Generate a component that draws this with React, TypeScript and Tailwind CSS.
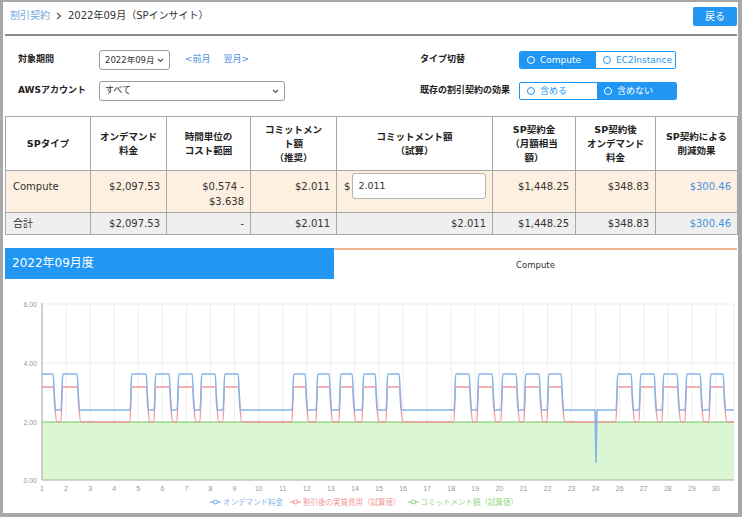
import React from "react";

const blueTop = 373;
const blueBase = 409;
const redTop = 386;
const redBase = 421;
const X0 = 42;
const X1 = 734;
const Y0 = 479;

const peaks: [number, number][] = [
  [42, 53], [63, 77], [132, 146], [156, 169], [179, 192], [202, 215], [225, 238],
  [294, 305], [318, 329], [341, 352], [364, 375], [388, 399],
  [456, 469], [479, 492], [503, 516], [526, 539], [549, 561],
  [618, 631], [641, 654], [664, 677], [687, 700], [711, 723],
];

function buildPath(top: number, base: number, rise: number, fall: number, dip?: boolean) {
  let d = "";
  const first = peaks[0];
  if (first[0] <= X0) {
    d = `M ${X0} ${top}`;
  } else {
    d = `M ${X0} ${base}`;
  }
  peaks.forEach(([a, b], i) => {
    if (!(i === 0 && a <= X0)) {
      d += ` L ${a - rise} ${base} C ${a - rise * 0.4} ${base} ${a - rise * 0.6} ${top} ${a} ${top}`;
    }
    d += ` L ${b} ${top} C ${b + fall * 0.6} ${top} ${b + fall * 0.4} ${base} ${b + fall} ${base}`;
    if (dip && b === 561) {
      d += ` L 595 ${base} L 596 462 L 597 ${base}`;
    }
  });
  d += ` L ${X1} ${base}`;
  return d;
}

const xLabels = [
  "1", "2", "3", "4", "5", "6", "7", "8", "9", "10", "11", "12", "13", "14", "15", "16", "17", "18",
  "19", "20", "21", "22", "23", "24", "26", "27", "28", "29", "30",
];
const xAt = (i: number) => X0 + i * 24.07;

function Chevron() {
  return (
    <svg width="7" height="5" viewBox="0 0 7 5" className="shrink-0">
      <path d="M1 1 L3.5 3.5 L6 1" fill="none" stroke="#555" strokeWidth="1.2" />
    </svg>
  );
}

function Radio({ on }: { on: boolean }) {
  return (
    <span
      className={
        on
          ? "w-[8px] h-[8px] rounded-full border-[1.5px] border-white"
          : "w-[8px] h-[8px] rounded-full border-[1.5px] border-[#2196f3]"
      }
    />
  );
}

function Toggle({ a, b, sel, wa, wb }: { a: string; b: string; sel: 0 | 1; wa: number; wb: number }) {
  return (
    <div className="flex h-[18px] border border-[#2196f3] rounded-[2px] overflow-hidden text-[9px] leading-[16px]">
      <div
        style={{ width: wa }}
        className={
          sel === 0
            ? "flex items-center gap-[5px] pl-[7px] bg-[#2196f3] text-white"
            : "flex items-center gap-[5px] pl-[7px] bg-white text-[#2196f3]"
        }
      >
        <Radio on={sel === 0} />
        <span>{a}</span>
      </div>
      <div
        style={{ width: wb }}
        className={
          sel === 1
            ? "flex items-center gap-[5px] pl-[7px] bg-[#2196f3] text-white"
            : "flex items-center gap-[5px] pl-[7px] bg-white text-[#2196f3]"
        }
      >
        <Radio on={sel === 1} />
        <span>{b}</span>
      </div>
    </div>
  );
}

function LegendItem({ color, label }: { color: string; label: string }) {
  return (
    <div className="flex items-center gap-[2px]" style={{ color }}>
      <svg width="11" height="6" viewBox="0 0 11 6">
        <line x1="0" y1="3" x2="11" y2="3" stroke={color} strokeWidth="1.2" />
        <circle cx="5.5" cy="3" r="2" fill="white" stroke={color} strokeWidth="1.2" />
      </svg>
      <span>{label}</span>
    </div>
  );
}

export default function App() {
  const th = "border border-[#a8a8a8] font-bold text-center align-middle leading-[14px] text-[9.5px] text-[#222]";
  const tdR = "border border-[#a8a8a8] text-right align-top pt-[8px] pr-[6px] leading-[15px]";
  const tdT = "border border-[#a8a8a8] text-right align-middle pr-[6px] leading-[14px]";

  return (
    <div className="w-[742px] h-[517px] bg-white border-t-2 border-l-[3px] border-r-4 border-b-4 border-[#a8a8a8] overflow-hidden font-['DejaVu_Sans','Noto_Sans_CJK_JP',sans-serif] text-[#333]">
      {/* header */}
      <div className="flex justify-between items-start h-[32px]">
        <div className="flex items-center mt-[4px] ml-[7px] leading-[20px] text-[10px]">
          <span className="text-[#6fa8dc]">割引契約</span>
          <span className="mx-[6px] text-[#666]">
            <svg width="6" height="8" viewBox="0 0 6 8">
              <path d="M1 1 L4.5 4 L1 7" fill="none" stroke="#555" strokeWidth="1.2" />
            </svg>
          </span>
          <span className="text-[#333]">2022年09月（SPインサイト）</span>
        </div>
        <button className="mt-[5px] mr-[1px] w-[44px] h-[19px] bg-[#2196f3] text-white text-[10px] leading-[19px] rounded-[2px]">
          戻る
        </button>
      </div>
      <div className="ml-[2px] mr-[1px] h-[2px] bg-[#8c8c8c]" />

      {/* filters */}
      <div className="mt-[14px] pl-[15px] grid grid-cols-[81px_321px_99px_160px] gap-y-[11px] items-center text-[9px]">
        <div className="font-bold text-[#222]">対象期間</div>
        <div className="flex items-center">
          <div className="w-[71px] h-[20px] border border-[#9a9a9a] rounded-[3px] flex items-center justify-between pl-[5px] pr-[5px] text-[#333] whitespace-nowrap text-[8.5px]">
            <span>2022年09月</span>
            <Chevron />
          </div>
          <span className="ml-[15px] text-[#4a90e2]">&lt;前月</span>
          <span className="ml-[13px] text-[#4a90e2]">翌月&gt;</span>
        </div>
        <div className="font-bold text-[#222]">タイプ切替</div>
        <div>
          <div className="w-[157px]">
            <Toggle a="Compute" b="EC2Instance" sel={0} wa={76} wb={79} />
          </div>
        </div>

        <div className="font-bold text-[#222]">AWSアカウント</div>
        <div>
          <div className="w-[186px] h-[20px] border border-[#9a9a9a] rounded-[3px] flex items-center justify-between pl-[5px] pr-[5px] text-[#333]">
            <span>すべて</span>
            <Chevron />
          </div>
        </div>
        <div className="font-bold text-[#222]">既存の割引契約の効果</div>
        <div>
          <div className="w-[158px]">
            <Toggle a="含める" b="含めない" sel={1} wa={77} wb={79} />
          </div>
        </div>
      </div>

      {/* table */}
      <table className="ml-[2px] mt-[15px] w-[732px] border-collapse table-fixed text-[10px] text-[#333]">
        <colgroup>
          <col className="w-[85px]" />
          <col className="w-[76px]" />
          <col className="w-[84px]" />
          <col className="w-[86px]" />
          <col className="w-[156px]" />
          <col className="w-[83px]" />
          <col className="w-[80px]" />
          <col className="w-[82px]" />
        </colgroup>
        <thead>
          <tr className="h-[54px] bg-white">
            <th className={th}>SPタイプ</th>
            <th className={th}>
              オンデマンド
              <br />
              料金
            </th>
            <th className={th}>
              時間単位の
              <br />
              コスト範囲
            </th>
            <th className={th}>
              コミットメン
              <br />
              ト額
              <br />
              （推奨）
            </th>
            <th className={th}>
              コミットメント額
              <br />
              （試算）
            </th>
            <th className={th}>
              SP契約金
              <br />
              （月額相当
              <br />
              額）
            </th>
            <th className={th}>
              SP契約後
              <br />
              オンデマンド
              <br />
              料金
            </th>
            <th className={th}>
              SP契約による
              <br />
              削減効果
            </th>
          </tr>
        </thead>
        <tbody>
          <tr className="h-[42px] bg-[#fdf0e1]">
            <td className="border border-[#a8a8a8] text-left align-top pt-[8px] pl-[7px] leading-[15px]">Compute</td>
            <td className={tdR}>$2,097.53</td>
            <td className={tdR}>
              $0.574 -
              <br />
              $3.638
            </td>
            <td className={tdR}>$2.011</td>
            <td className="border border-[#a8a8a8] align-top pt-[2px] pl-[7px]">
              <div className="flex items-start">
                <span className="mt-[6px] leading-[15px]">$</span>
                <div className="ml-[2px] w-[134px] h-[26px] bg-white border border-[#b5b5b5] rounded-[3px] pl-[5px] flex items-center text-[9.5px]">
                  2.011
                </div>
              </div>
            </td>
            <td className={tdR}>$1,448.25</td>
            <td className={tdR}>$348.83</td>
            <td className={tdR + " text-[#4a90e2]"}>$300.46</td>
          </tr>
          <tr className="h-[22px] bg-[#efefef]">
            <td className="border border-[#a8a8a8] text-left align-middle pl-[7px] leading-[14px]">合計</td>
            <td className={tdT}>$2,097.53</td>
            <td className={tdT}>-</td>
            <td className={tdT}>$2.011</td>
            <td className={tdT}>$2.011</td>
            <td className={tdT}>$1,448.25</td>
            <td className={tdT}>$348.83</td>
            <td className={tdT + " text-[#4a90e2]"}>$300.46</td>
          </tr>
        </tbody>
      </table>

      {/* chart tabs */}
      <div className="mt-[13px] ml-[2px] mr-[1px] flex h-[31px]">
        <div className="w-[329px] bg-[#2196f3] text-white text-[12px] leading-[31px] pl-[7px]">2022年09月度</div>
        <div className="flex-1 border-t-2 border-[#efb58a] text-center text-[8.5px] leading-[12px] pt-[9px] text-[#333]">
          Compute
        </div>
      </div>

      {/* chart */}
      <svg width="735" height="217" viewBox="3 278 735 217" className="block">
        {xLabels.map((_, i) => (
          <line key={"g" + i} x1={xAt(i)} y1={303} x2={xAt(i)} y2={Y0} stroke="#efefef" strokeWidth="1" />
        ))}
        <line x1={X1} y1={303} x2={X1} y2={Y0} stroke="#efefef" strokeWidth="1" />
        {[303, 362].map((y) => (
          <line key={"h" + y} x1={X0} y1={y} x2={X1} y2={y} stroke="#ececec" strokeWidth="1" />
        ))}
        <rect x={X0} y={redBase} width={X1 - X0} height={Y0 - redBase} fill="#daf6d2" />
        <line x1={X0} y1={redBase} x2={X1} y2={redBase} stroke="#98d888" strokeWidth="1.5" />
        <path d={buildPath(redTop, redBase, 2.5, 4)} fill="none" stroke="#f09a9a" strokeWidth="1.4" />
        <path d={buildPath(blueTop, blueBase, 2.2, 2.2, true)} fill="none" stroke="#86b3e8" strokeWidth="1.5" />
        <line x1={X0} y1={302} x2={X0} y2={Y0} stroke="#aaa" strokeWidth="1" />
        <line x1={X0} y1={Y0} x2={X1} y2={Y0} stroke="#aaa" strokeWidth="1" />
        {[
          ["6.00", 303],
          ["4.00", 362],
          ["2.00", 421],
          ["0.00", 479],
        ].map(([t, y]) => (
          <text
            key={t as string}
            x={37}
            y={(y as number) + 2.5}
            textAnchor="end"
            fontSize="7"
            fill="#999"
            fontFamily="'Liberation Sans', sans-serif"
          >
            {t}
          </text>
        ))}
        {xLabels.map((t, i) => (
          <text
            key={"x" + i}
            x={xAt(i)}
            y={490}
            textAnchor="middle"
            fontSize="7"
            fill="#999"
            fontFamily="'Liberation Sans', sans-serif"
          >
            {t}
          </text>
        ))}
      </svg>

      {/* legend */}
      <div className="flex justify-center gap-[7px] pr-[13px] text-[7.5px] leading-[12px] font-['Noto_Sans_CJK_JP',sans-serif]">
        <LegendItem color="#86b3e8" label="オンデマンド料金" />
        <LegendItem color="#f09a9a" label="割引後の実質費用（試算値）" />
        <LegendItem color="#98d888" label="コミットメント額（試算値）" />
      </div>
    </div>
  );
}
